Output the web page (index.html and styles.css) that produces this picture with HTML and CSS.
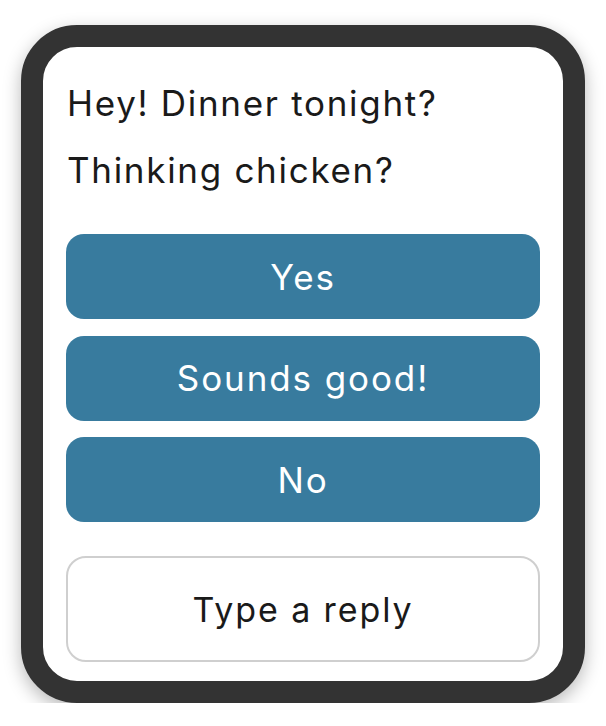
FILE: index.html
```html
<!DOCTYPE html>
<html>
<head>
<meta charset="utf-8">
<link rel="stylesheet" href="styles.css">
</head>
<body>
<div class="watch">
  <div class="screen">
    <div class="messages">
      <p class="msg">Hey! Dinner tonight?</p>
      <p class="msg">Thinking chicken?</p>
    </div>
    <div class="replies">
      <div class="btn">Yes</div>
      <div class="btn">Sounds good!</div>
      <div class="btn">No</div>
    </div>
    <div class="type">Type a reply</div>
  </div>
</div>
</body>
</html>
```
FILE: styles.css
```css
html, body {
  margin: 0;
  padding: 0;
  background: #fff;
}
body {
  font-family: "Inter", "Liberation Sans", sans-serif;
  padding: 25px 21px 0;
}
.watch {
  width: 564px;
  height: 678px;
  box-sizing: border-box;
  border: 22px solid #333;
  border-radius: 56px;
  background: #fff;
  box-shadow: 0 6px 18px rgba(0, 0, 0, 0.28);
  overflow: hidden;
}
.screen {
  height: 100%;
  box-sizing: border-box;
  padding: 36px 23px 19px;
  display: flex;
  flex-direction: column;
}
.messages {
  display: flex;
  flex-direction: column;
  gap: 27px;
  padding-left: 1px;
}
.msg {
  margin: 0;
  font-size: 35px;
  line-height: 40px;
  letter-spacing: 1.7px;
  color: #1a1a1a;
}
.replies {
  margin-top: 44px;
  display: flex;
  flex-direction: column;
  gap: 16.5px;
}
.btn {
  height: 85px;
  border-radius: 18px;
  background: #387b9e;
  color: #fff;
  font-size: 35px;
  letter-spacing: 1.9px;
  display: flex;
  align-items: center;
  justify-content: center;
}
.type {
  margin-top: 34px;
  height: 106px;
  box-sizing: border-box;
  border: 2px solid #cfcfcf;
  border-radius: 20px;
  font-size: 34px;
  letter-spacing: 1.9px;
  color: #1a1a1a;
  display: flex;
  align-items: center;
  justify-content: center;
}
```
